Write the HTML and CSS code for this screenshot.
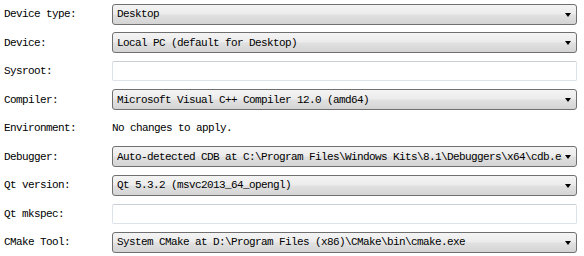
FILE: index.html
```html
<!DOCTYPE html>
<html lang="en">

<head>
    <meta charset="UTF-8">
    <title>Kit Settings</title>
    <link rel="stylesheet" href="styles.css">
</head>

<body>
    <div class="kit-form">
        <label>Device type:</label>
        <div class="combo"><span class="value">Desktop</span><span class="arrow"></span></div>

        <label>Device:</label>
        <div class="combo"><span class="value">Local PC (default for Desktop)</span><span class="arrow"></span></div>

        <label>Sysroot:</label>
        <div class="line-edit"></div>

        <label>Compiler:</label>
        <div class="combo"><span class="value">Microsoft Visual C++ Compiler 12.0 (amd64)</span><span class="arrow"></span></div>

        <label>Environment:</label>
        <div class="plain">No changes to apply.</div>

        <label>Debugger:</label>
        <div class="combo"><span class="value">Auto-detected CDB at C:\Program Files\Windows Kits\8.1\Debuggers\x64\cdb.exe</span><span class="arrow"></span></div>

        <label>Qt version:</label>
        <div class="combo"><span class="value">Qt 5.3.2 (msvc2013_64_opengl)</span><span class="arrow"></span></div>

        <label>Qt mkspec:</label>
        <div class="line-edit"></div>

        <label>CMake Tool:</label>
        <div class="combo"><span class="value">System CMake at D:\Program Files (x86)\CMake\bin\cmake.exe</span><span class="arrow"></span></div>
    </div>
</body>

</html>
```

FILE: styles.css
```css
*{
    margin: 0;
    padding: 0;
    box-sizing: border-box;
}
body{
    background: #ffffff;
    color: #000000;
    font-family: "Liberation Mono", "DejaVu Sans Mono", monospace;
    font-size: 11px;
    letter-spacing: -0.6px;
}
.kit-form{
    display: grid;
    grid-template-columns: 108px 1fr;
    grid-auto-rows: 28.5px;
    align-items: center;
    padding: 0 7px 0 4px;
}
.kit-form label{
    white-space: nowrap;
}
.combo{
    display: flex;
    align-items: center;
    height: 21px;
    padding: 0 4px 0 4px;
    border: 1px solid #707070;
    border-radius: 3px;
    background: linear-gradient(#f4f4f4, #ececec 45%, #e0e0e0 55%, #d4d4d4);
    overflow: hidden;
}
.combo .value{
    flex: 1;
    white-space: nowrap;
    overflow: hidden;
}
.combo .arrow{
    width: 0;
    height: 0;
    margin: 1px 1px 0 3px;
    border-left: 3.5px solid transparent;
    border-right: 3.5px solid transparent;
    border-top: 4px solid #000000;
}
.line-edit{
    height: 20px;
    border: 1px solid #dde2e8;
    border-top-color: #c9ced6;
    border-radius: 2px;
    background: #ffffff;
}
.plain{
    white-space: nowrap;
}
```
